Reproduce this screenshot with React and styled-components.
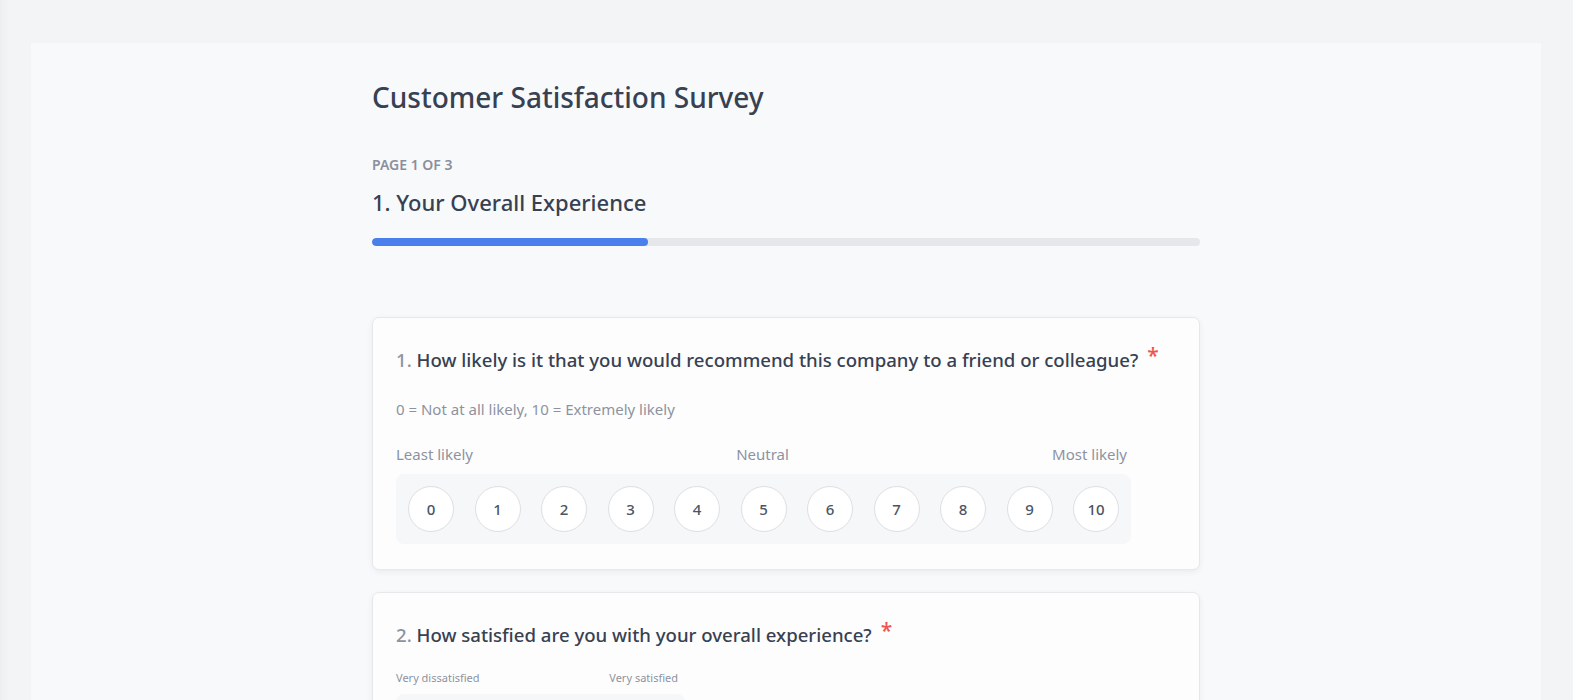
import React from "react";
import styled, { createGlobalStyle } from "styled-components";

const GlobalStyle = createGlobalStyle`
	html, body {
		margin: 0;
		padding: 0;
		background: #ffffff;
		font-family: "Noto Sans", "Open Sans", sans-serif;
		color: #374151;
	}
	* {
		box-sizing: border-box;
	}
`;

const Page = styled.div`
	width: calc(100% - 15px);
	min-height: 100vh;
	background: #f3f4f6;
	padding: 43px 32px 0 31px;
	display: flex;
	box-shadow: inset 10px 0 10px -8px rgba(0, 0, 0, 0.04);
`;

const Panel = styled.main`
	flex: 1;
	background: #f8f9fb;
	padding: 34px 0 40px;
	display: flex;
	justify-content: center;
`;

const Content = styled.div`
	width: 828px;
`;

const Title = styled.h1`
	margin: 0;
	font-size: 28px;
	font-weight: 500;
	line-height: 40px;
	color: #374151;
`;

const PageLabel = styled.div`
	margin-top: 38px;
	font-size: 14px;
	font-weight: 600;
	line-height: 20px;
	text-transform: uppercase;
	color: #8a909b;
`;

const SectionTitle = styled.h2`
	margin: 11px 0 0;
	font-size: 22px;
	font-weight: 500;
	line-height: 32px;
	color: #374151;
`;

const Track = styled.div`
	margin-top: 20px;
	height: 8px;
	border-radius: 4px;
	background: #e5e7eb;
	overflow: hidden;
`;

const Fill = styled.div`
	height: 100%;
	border-radius: 4px;
	background: #4a80ec;
`;

const Questions = styled.div`
	margin-top: 71px;
	display: flex;
	flex-direction: column;
	gap: 22px;
`;

const Card = styled.section`
	background: #fdfdfe;
	border: 1px solid #e6e8ec;
	border-radius: 7px;
	padding: 21px 23px 25px;
	box-shadow: 0 2px 6px rgba(17, 24, 39, 0.06);
`;

const Question = styled.h3`
	margin: 0;
	font-size: 18.6px;
	font-weight: 500;
	line-height: 32px;
	color: #374151;
	span {
		color: #8d939e;
	}
	sup {
		color: #ef5350;
		font-size: 21px;
		margin-left: 9px;
		vertical-align: 4px;
	}
`;

const Hint = styled.p`
	margin: 22px 0 0;
	font-size: 15px;
	line-height: 22px;
	color: #8d939e;
`;

const Scale = styled.div`
	margin-top: ${(p) => p.$top}px;
	width: ${(p) => p.$width}px;
`;

const Ends = styled.div`
	display: flex;
	justify-content: space-between;
	font-size: ${(p) => p.$size}px;
	line-height: ${(p) => p.$line}px;
	color: #8d939e;
	padding-right: ${(p) => p.$inset}px;
`;

const Options = styled.div`
	margin-top: ${(p) => p.$gap}px;
	display: flex;
	justify-content: space-between;
	padding: 12px;
	background: #f6f7f9;
	border-radius: 8px;
`;

const Option = styled.button`
	width: 46px;
	height: 46px;
	border-radius: 50%;
	border: 1px solid #dcdfe4;
	background: #fff;
	font-family: inherit;
	font-size: 15px;
	font-weight: 500;
	color: #4b5563;
	padding: 0;
	cursor: pointer;
`;

const nps = Array.from({ length: 11 }, (_, i) => i);

const App = () => {
	return (
		<>
			<GlobalStyle />
			<Page>
				<Panel>
					<Content>
						<Title>Customer Satisfaction Survey</Title>
						<PageLabel>Page 1 of 3</PageLabel>
						<SectionTitle>1. Your Overall Experience</SectionTitle>
						<Track>
							<Fill style={{ width: `${(1 / 3) * 100}%` }} />
						</Track>

						<Questions>
							<Card>
								<Question>
									<span>1.</span> How likely is it that you would recommend this
									company to a friend or colleague?<sup>*</sup>
								</Question>
								<Hint>0 = Not at all likely, 10 = Extremely likely</Hint>
								<Scale $top={23} $width={735}>
									<Ends $size={15} $line={22} $inset={4}>
										<span>Least likely</span>
										<span>Neutral</span>
										<span>Most likely</span>
									</Ends>
									<Options $gap={9}>
										{nps.map((n) => (
											<Option key={n}>{n}</Option>
										))}
									</Options>
								</Scale>
							</Card>

							<Card>
								<Question>
									<span>2.</span> How satisfied are you with your overall
									experience?<sup>*</sup>
								</Question>
								<Scale $top={18} $width={289}>
									<Ends $size={11} $line={18} $inset={7}>
										<span>Very dissatisfied</span>
										<span>Very satisfied</span>
									</Ends>
									<Options $gap={7}>
										{[1, 2, 3, 4, 5].map((n) => (
											<Option key={n}>{n}</Option>
										))}
									</Options>
								</Scale>
							</Card>
						</Questions>
					</Content>
				</Panel>
			</Page>
		</>
	);
};

export default App;
